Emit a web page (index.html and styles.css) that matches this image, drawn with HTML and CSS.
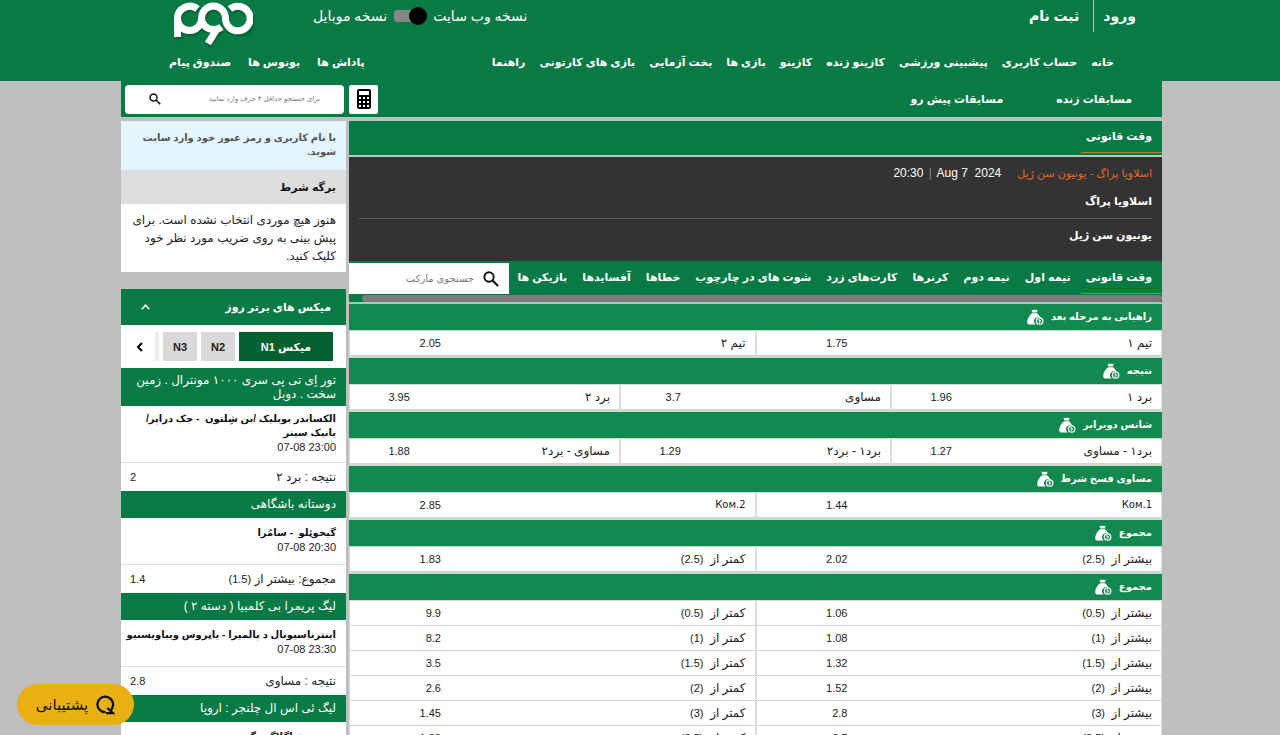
FILE: index.html
```html
<!DOCTYPE html>
<html lang="fa" dir="rtl">
<head>
<meta charset="utf-8">
<title>اسلاویا پراگ - یونیون سن ژیل</title>
<link rel="stylesheet" href="styles.css">
</head>
<body>
<svg class="defs" aria-hidden="true">
  <symbol id="bag" viewBox="0 0 17 16">
    <path fill="#fff" d="M4.500.4 6 1.200 7.600.6 9.200 1.200 10.700.4 9.800 3.500H5.400zM5.200 4.300h4.800c2 1.700 3.200 3.900 3.400 4.600a4 4 0 0 0-4.700 6.500H2.200C0 15.400-.1 13.200.5 10.900 1.200 8.500 3 5.700 5.200 4.300z"/>
    <circle cx="12.600" cy="12" r="3.200" fill="none" stroke="#fff" stroke-width="1.300"/>
    <path d="m11.800 10.500 1.500 1.500-1.500 1.500" fill="none" stroke="#fff" stroke-width="1.200"/>
  </symbol>
  <symbol id="lens" viewBox="0 0 16 16">
    <circle cx="6" cy="6" r="4.700" fill="none" stroke="#111" stroke-width="1.900"/>
    <path d="m9.300 9.300 5.700 5.700" stroke="#111" stroke-width="2.200"/>
  </symbol>
</svg>

<header class="site-header">
  <div class="top-row">
    <nav class="account">
      <a href="#" class="login">ورود</a>
      <a href="#" class="signup">ثبت نام</a>
    </nav>
    <div class="version">
      <label for="version">نسخه وب سایت</label>
      <input type="checkbox" id="version" class="switch" checked>
      <label for="version">نسخه موبایل</label>
    </div>
    <a href="#" class="logo" aria-label="دوم">
      <svg viewBox="0 0 84 48" width="84" height="48" fill="none" stroke="#fff" stroke-width="7">
        <path d="M8.500 37V18.500A12.300 12.300 0 0 1 28.500 9"/>
        <path d="M8.500 18.500a12 12 0 0 0 24 0 12 12.500 0 0 1 24 0 12.300 12.300 0 1 0 4.500-9.500"/>
        <path d="M32.500 18.500a12 11.500 0 0 0 12 11c3 0 6-1 8-2.500"/>
        <path d="M48.500 28 39 43.500"/>
      </svg>
    </a>
  </div>
  <div class="nav-row">
    <nav class="nav main-nav">
      <a href="#">خانه</a><a href="#">حساب کاربری</a><a href="#">پیشبینی ورزشی</a><a href="#">کازینو زنده</a><a href="#">کازینو</a><a href="#">بازی ها</a><a href="#">بخت آزمایی</a><a href="#">بازی های کارتونی</a><a href="#">راهنما</a>
    </nav>
    <nav class="nav">
      <a href="#">پاداش ها</a><a href="#">بونوس ها</a><a href="#">صندوق پیام</a>
    </nav>
  </div>
</header>

<div class="wrap">
  <div class="subbar">
    <nav class="sub-links"><a href="#">مسابقات زنده</a><a href="#">مسابقات پیش رو</a></nav>
    <div class="tools">
      <button class="calc" aria-label="ماشین حساب">
        <svg viewBox="0 0 14 20" width="14" height="20"><rect width="14" height="20" rx="2"/><path fill="#fff" d="M2 2h10v4H2zM2 8h2v2H2zM6 8h2v2H6zM10 8h2v2h-2zM2 12h2v2H2zM6 12h2v2H6zM10 12h2v2h-2zM2 16h2v2H2zM6 16h2v2H6zM10 16h2v2h-2z"/></svg>
      </button>
      <div class="search">
        <input type="text" aria-label="جستجو" placeholder="برای جستجو حداقل ۳ حرف وارد نمایید">
        <button aria-label="جستجو"><svg width="12" height="12"><use href="#lens"/></svg></button>
      </div>
    </div>
  </div>

  <div class="columns">
    <main>
      <div class="period"><a href="#" class="tab active">وقت قانونی</a></div>
      <section class="match">
        <div class="match-info"><span class="match-name">اسلاویا پراگ - یونیون سن ژیل</span><span class="match-date" dir="ltr">20:30 <i>|</i> Aug&nbsp;7&nbsp; 2024</span></div>
        <div class="team">اسلاویا پراگ</div>
        <div class="team">یونیون سن ژیل</div>
      </section>
      <div class="markets">
        <nav class="tabs">
          <a href="#" class="tab active">وقت قانونی</a><a href="#" class="tab">نیمه اول</a><a href="#" class="tab">نیمه دوم</a><a href="#" class="tab">کرنرها</a><a href="#" class="tab">کارت‌های زرد</a><a href="#" class="tab">شوت های در چارچوب</a><a href="#" class="tab">خطاها</a><a href="#" class="tab">آفسایدها</a><a href="#" class="tab">بازیکن ها</a>
        </nav>
        <div class="market-search">
          <svg width="16" height="16"><use href="#lens"/></svg>
          <input type="text" aria-label="جستجوی مارکت" placeholder="جستجوی مارکت">
        </div>
      </div>
      <div class="track"><div class="thumb"></div></div>

      <section class="group">
        <h3>راهیابی به مرحله بعد <svg class="bag"><use href="#bag"/></svg></h3>
        <div class="odds two"><button><span>تیم ۱</span><b>1.75</b></button><button><span>تیم ۲</span><b>2.05</b></button></div>
      </section>
      <section class="group">
        <h3>نتیجه <svg class="bag"><use href="#bag"/></svg></h3>
        <div class="odds three"><button><span>برد ۱</span><b>1.96</b></button><button><span>مساوی</span><b>3.7</b></button><button><span>برد ۲</span><b>3.95</b></button></div>
      </section>
      <section class="group">
        <h3>شانس دوبرابر <svg class="bag"><use href="#bag"/></svg></h3>
        <div class="odds three"><button><span>برد۱ - مساوی</span><b>1.27</b></button><button><span>برد۱ - برد۲</span><b>1.29</b></button><button><span>مساوی - برد۲</span><b>1.88</b></button></div>
      </section>
      <section class="group">
        <h3>مساوی فسخ شرط <svg class="bag"><use href="#bag"/></svg></h3>
        <div class="odds two"><button><span dir="ltr" class="latin">Ком.1</span><b>1.44</b></button><button><span dir="ltr" class="latin">Ком.2</span><b>2.85</b></button></div>
      </section>
      <section class="group">
        <h3>مجموع <svg class="bag"><use href="#bag"/></svg></h3>
        <div class="odds two"><button><span>بیشتر از &nbsp;<i>(2.5)</i></span><b>2.02</b></button><button><span>کمتر از &nbsp;<i>(2.5)</i></span><b>1.83</b></button></div>
      </section>
      <section class="group">
        <h3>مجموع <svg class="bag"><use href="#bag"/></svg></h3>
        <div class="odds two">
          <button><span>بیشتر از &nbsp;<i>(0.5)</i></span><b>1.06</b></button><button><span>کمتر از &nbsp;<i>(0.5)</i></span><b>9.9</b></button>
          <button><span>بیشتر از &nbsp;<i>(1)</i></span><b>1.08</b></button><button><span>کمتر از &nbsp;<i>(1)</i></span><b>8.2</b></button>
          <button><span>بیشتر از &nbsp;<i>(1.5)</i></span><b>1.32</b></button><button><span>کمتر از &nbsp;<i>(1.5)</i></span><b>3.5</b></button>
          <button><span>بیشتر از &nbsp;<i>(2)</i></span><b>1.52</b></button><button><span>کمتر از &nbsp;<i>(2)</i></span><b>2.6</b></button>
          <button><span>بیشتر از &nbsp;<i>(3)</i></span><b>2.8</b></button><button><span>کمتر از &nbsp;<i>(3)</i></span><b>1.45</b></button>
          <button><span>بیشتر از &nbsp;<i>(3.5)</i></span><b>3.7</b></button><button><span>کمتر از &nbsp;<i>(3.5)</i></span><b>1.28</b></button>
        </div>
      </section>
    </main>

    <aside>
      <p class="notice">با نام کاربری و رمز عبور خود وارد سایت شوید.</p>
      <h2 class="slip-title">برگه شرط</h2>
      <p class="slip-text">هنوز هیچ موردی انتخاب نشده است. برای پیش بینی به روی ضریب مورد نظر خود کلیک کنید.</p>

      <section class="mixes">
        <h2 class="mix-title">میکس های برتر روز <svg width="9" height="6" fill="none" stroke="#fff" stroke-width="1.500"><path d="m.7 5.200 3.800-4 3.800 4"/></svg></h2>
        <div class="mix-tabs">
          <button class="mix-tab current">میکس N1</button><button class="mix-tab">N2</button><button class="mix-tab">N3</button><span class="sliver"></span>
          <button class="more" aria-label="بعدی"><svg width="7" height="10" fill="none" stroke="#000" stroke-width="2"><path d="M6 1 2 5l4 4"/></svg></button>
        </div>
        <h4>تور اِی تی پی سری ۱۰۰۰ مونترال . زمین سخت . دوبل</h4>
        <div class="game"><strong>الکساندر بوبلیک /بن شِلتون &nbsp;- جک دراپر/ یانیک سینر</strong><time dir="ltr">07-08 23:00</time></div>
        <div class="pick"><span>نتیجه : برد ۲</span><b>2</b></div>
        <h4>دوستانه باشگاهی</h4>
        <div class="game"><strong>گیخوئِلو &nbsp;- سامُرا</strong><time dir="ltr">07-08 20:30</time></div>
        <div class="pick"><span>مجموع: بیشتر از <i>(1.5)</i></span><b>1.4</b></div>
        <h4>لیگ پریمرا بی کلمبیا ( دسته ۲ )</h4>
        <div class="game"><strong>اینترناسیونال د پالمیرا - یانِروس ویباویسنیو</strong><time dir="ltr">07-08 23:30</time></div>
        <div class="pick"><span>نتیجه : مساوی</span><b>2.8</b></div>
        <h4>لیگ ئی اس ال چلنجر : اروپا</h4>
        <div class="game"><strong>هیرو - فناگلاگرینگ</strong><time dir="ltr">07-08 20:30</time></div>
      </section>
    </aside>
  </div>
</div>

<button class="support">
  <svg width="20" height="20" viewBox="0 0 20 20" fill="none" stroke="#111" stroke-width="2.300"><path d="M10.500 17.200A7.800 7.800 0 1 1 17.600 12c-.4 1.500-1.200 2.700-2.200 3.500M12.500 13l5.500 5.200h-7"/></svg>
  پشتیبانی
</button>
</body>
</html>
```
FILE: styles.css
```css
* { box-sizing: border-box; }
html { scrollbar-width: none; }
body {
  margin: 0;
  background: #bfbfbf;
  color: #222;
  font: 12px/14px "Liberation Sans", "DejaVu Sans", sans-serif;
}
a { color: inherit; text-decoration: none; white-space: nowrap; }
button, input { font: inherit; color: inherit; border: 0; padding: 0; margin: 0; }
button { cursor: pointer; }
h2, h3, h4, p { margin: 0; }
.defs { display: none; }

.site-header { background: #087a45; color: #fff; padding: 0 144px 0 169px; }
.top-row { display: flex; height: 48px; align-items: flex-start; }
.account { display: flex; font-size: 14px; font-weight: bold; line-height: 32px; }
.login { border-left: 1px solid #9fccb5; padding-left: 9px; }
.signup { padding-right: 14px; }
.version { display: flex; gap: 6px; align-items: center; height: 32px; font-size: 14px; margin-right: auto; }
.switch { appearance: none; position: relative; width: 34px; height: 18px; background: linear-gradient(#858585, #858585) center / 32px 12px no-repeat; border-radius: 9px; }
.switch::after { content: ""; position: absolute; top: 0; right: 0; width: 18px; height: 18px; border-radius: 50%; background: #000; }
.logo { margin-right: 60px; filter: drop-shadow(1px 2px 1px #065c33); }
.nav-row { display: flex; justify-content: space-between; height: 33px; padding: 6px 22px 0 0; }
.nav { display: flex; gap: 17px; font-size: 11px; font-weight: bold; line-height: 16px; }
.main-nav { gap: 14px; }

.wrap { padding: 0 118px 0 121px; }
.subbar { display: flex; justify-content: space-between; height: 36px; background: #087a45; color: #fff; padding: 0 30px 0 4px; }
.sub-links { display: flex; gap: 53px; font-size: 11px; font-weight: bold; line-height: 36px; }
.tools { display: flex; gap: 5px; align-items: center; }
.calc { display: grid; place-items: center; width: 29px; height: 29px; background: #fff; border-radius: 2px; }
.search { display: flex; width: 219px; height: 29px; background: #fff; border-radius: 4px; padding: 0 24px; align-items: center; }
.search input { flex: 1; min-width: 0; background: none; font-size: 7px; color: #222; outline: 0; }
.search button { background: none; display: flex; }
::placeholder { color: #777; opacity: 1; }

.columns { display: grid; grid-template-columns: minmax(0, 1fr) 225px; gap: 3px; margin-top: 4px; align-items: start; }
.period { display: flex; height: 36px; background: #087a45; color: #fff; border-bottom: 2px solid #b2cbbd; }
.tab { display: block; padding: 0 10px 0 5px; line-height: 31px; height: 32px; font-weight: bold; font-size: 11px; }
.active { border-bottom: 1px solid #a08f20; }
.match { background: #333; color: #fff; height: 104px; padding: 8px 10px 0; }
.match-info { display: flex; gap: 16px; line-height: 16px; }
.match-name { color: #e5682a; font-size: 11px; }
.match-date i { color: #888; font-style: normal; margin: 0 2px; }
.team { font-weight: bold; font-size: 11px; line-height: 28px; margin-top: 6px; }
.team + .team { border-top: 1px solid #606060; margin-top: 3px; padding-top: 2px; }
.markets { display: flex; background: #087a45; color: #fff; padding-top: 1px; justify-content: space-between; }
.tabs { display: flex; min-width: 0; }
.market-search { display: flex; flex: none; width: 160px; align-items: center; gap: 9px; height: 31px; margin-top: 1px; padding: 0 10px; background: #fff; }
.market-search input { min-width: 0; flex: 1; background: none; font-size: 10px; color: #222; }
.track { background: #087a45; height: 10px; padding: 1px 0 0 13px; border-bottom: 2px solid #a9c7b7; }
.thumb { height: 7px; background: #7b7b7b; border-radius: 4px; }

.group h3 { display: flex; align-items: center; gap: 7px; height: 26px; padding: 0 10px; background: #14894f; color: #fff; font-size: 10px; font-weight: bold; }
.bag { width: 17px; height: 16px; }
.odds { display: grid; background: #dcdcdc; border-top: 1px solid #c8dccf; border-bottom: 2px solid #c8dccf; padding: 0 1px; column-gap: 2px; }
.two { grid-template-columns: 1fr 1fr; }
.three { grid-template-columns: 1fr 1fr 1fr; }
.odds button { display: grid; grid-template-columns: 77% 1fr; align-items: center; height: 25px; padding-right: 9px; background: #fff; border-bottom: 1px solid #d4d4d4; color: #222; text-align: right; }
b, .odds i, .pick i { font-weight: normal; font-style: normal; font-size: 11px; }
.odds .latin { font-family: "DejaVu Sans", sans-serif; font-size: 10px; }

.notice { background: #e3f6fd; color: #555; font-size: 10px; font-weight: bold; min-height: 49px; padding: 10px 10px 11px; }
.slip-title { background: #ddd; color: #111; font-size: 11px; line-height: 34px; padding: 0 10px; }
.slip-text { background: #fff; line-height: 18px; padding: 7px 10px; }
.mixes { margin-top: 17px; background: #fff; }
.mix-title { display: flex; justify-content: space-between; align-items: center; height: 36px; padding: 0 15px 0 20px; background: #087a45; color: #fff; font-size: 11px; }
.mix-tabs { display: flex; align-items: center; gap: 4px; height: 43px; padding: 0 13px 0 15px; }
.mix-tab { height: 29px; width: 34px; background: #d9d9d9; color: #222; font-size: 11px; font-weight: bold; }
.current { flex: 1; background: #04602f; color: #fff; }
.sliver { width: 4px; height: 29px; background: #eee; }
.more { display: flex; background: none; margin-right: 8px; }
.mixes h4 { background: #087a45; color: #fff; font-weight: normal; font-size: 12px; line-height: 14px; padding: 6px 10px 7px; }
.mixes h4:first-of-type { padding: 5px 10px; }
.game { display: flex; flex-direction: column; align-items: flex-start; justify-content: center; min-height: 47px; padding: 6px 10px 8px 0; border-bottom: 1px solid #ddd; }
.game strong { color: #111; font-size: 10px; }
.game time { font-size: 11px; }
.pick { display: flex; justify-content: space-between; line-height: 28px; padding: 0 10px 0 9px; }

.support { position: fixed; left: 17px; bottom: 10px; display: flex; align-items: center; justify-content: center; gap: 7px; width: 117px; height: 41px; border-radius: 21px; background: #e8b012; color: #111; font-size: 15px; }
```
